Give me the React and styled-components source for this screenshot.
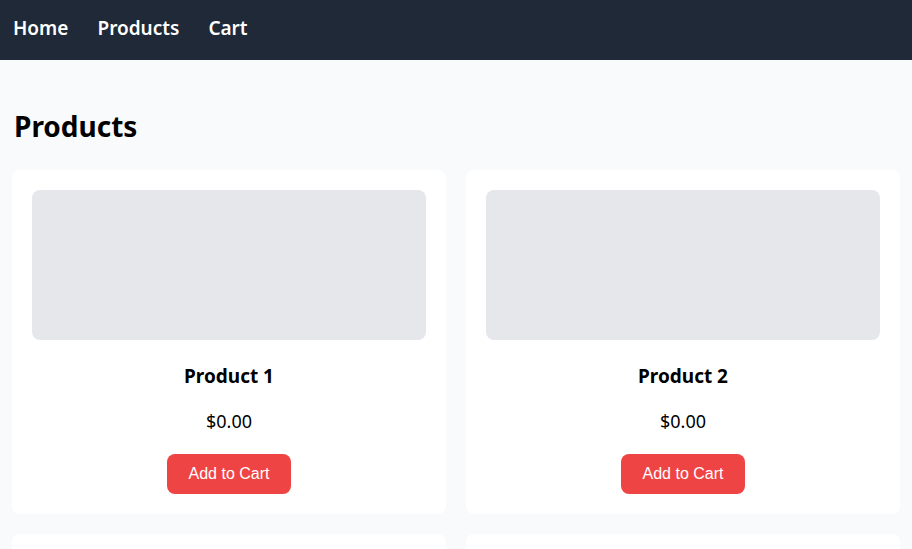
import * as React from "react";
import styled, { createGlobalStyle } from "styled-components";

const GlobalStyle = createGlobalStyle`
  body {
    margin: 0;
    background: #f9fafb;
    font-family: "Noto Sans", "Open Sans", sans-serif;
    color: #000;
  }
`;

const Nav = styled.nav`
  display: flex;
  align-items: center;
  gap: 29px;
  height: 60px;
  padding: 0 13px 5px;
  box-sizing: border-box;
  background: #1f2937;
`;

const NavLink = styled.a`
  color: #fff;
  font-size: 19px;
  font-weight: 600;
  text-decoration: none;
  cursor: pointer;
`;

const Page = styled.main`
  padding: 0 12px 20px;
`;

const PageHeadline = styled.h1`
  margin: 0;
  padding: 46px 2px 24px;
  font-size: 28px;
  line-height: 40px;
  font-weight: 700;
`;

const Grid = styled.section`
  display: grid;
  grid-template-columns: repeat(2, 1fr);
  gap: 20px;
`;

const Card = styled.div`
  display: flex;
  flex-direction: column;
  align-items: center;
  padding: 20px;
  background: #fff;
  border-radius: 8px;
`;

const ImagePlaceholder = styled.div`
  align-self: stretch;
  height: 150px;
  background: #e5e7eb;
  border-radius: 8px;
`;

const Title = styled.h3`
  margin: 22px 0 0;
  font-size: 19px;
  line-height: 28px;
  font-weight: 700;
`;

const Price = styled.p`
  margin: 17px 0 0;
  font-size: 18px;
  line-height: 28px;
`;

const AddButton = styled.button`
  margin-top: 19px;
  height: 40px;
  padding: 0 22px;
  border: none;
  border-radius: 8px;
  background: #ef4444;
  color: #fff;
  font-family: "Liberation Sans", Arial, sans-serif;
  font-size: 16px;
  cursor: pointer;
`;

const products = [
  { id: 1, name: "Product 1", price: 0 },
  { id: 2, name: "Product 2", price: 0 },
  { id: 3, name: "Product 3", price: 0 },
  { id: 4, name: "Product 4", price: 0 },
];

const App = () => {
  return (
    <>
      <GlobalStyle />
      <Nav>
        <NavLink>Home</NavLink>
        <NavLink>Products</NavLink>
        <NavLink>Cart</NavLink>
      </Nav>
      <Page>
        <PageHeadline>Products</PageHeadline>
        <Grid>
          {products.map((p) => (
            <Card key={p.id}>
              <ImagePlaceholder />
              <Title>{p.name}</Title>
              <Price>${p.price.toFixed(2)}</Price>
              <AddButton>Add to Cart</AddButton>
            </Card>
          ))}
        </Grid>
      </Page>
    </>
  );
};

export default App;
